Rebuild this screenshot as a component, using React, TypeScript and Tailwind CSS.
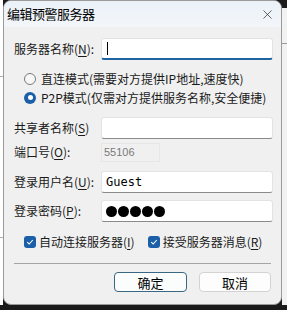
import { X } from 'lucide-react'

const font = { fontFamily: '"Noto Sans CJK SC", "Microsoft YaHei", sans-serif' }

function Key({ k }: { k: string }) {
  return <span className="underline underline-offset-2">{k}</span>
}

function Field({ children, focused }: { children?: React.ReactNode; focused?: boolean }) {
  return (
    <div
      className={`w-[172px] h-[22px] bg-white border border-[#e3e3e3] rounded-[3px] flex items-center pl-[4px] ${
        focused ? 'border-b-2 border-b-[#1f63a0]' : 'border-b-[#8a8a8a]'
      }`}
    >
      {children}
    </div>
  )
}

function Row({ label, children, className = '' }: { label: React.ReactNode; children: React.ReactNode; className?: string }) {
  return (
    <div className={`flex items-center h-[22px] ${className}`}>
      <div className="w-[87px] whitespace-nowrap">{label}</div>
      {children}
    </div>
  )
}

function Check() {
  return (
    <span className="w-[12px] h-[12px] rounded-[3px] bg-[#1a5fa8] flex items-center justify-center">
      <svg width="8" height="8" viewBox="0 0 8 8">
        <path d="M1.2 4.2 L3.2 6 L6.8 2" fill="none" stroke="white" strokeWidth="1.1" />
      </svg>
    </span>
  )
}

export default function App() {
  return (
    <div className="w-[287px] h-[310px] bg-[#1b1b1b] flex flex-col overflow-hidden text-[12px] text-[#1a1a1a]" style={font}>
      <div className="flex h-[305px]">
        {/* left edge of window behind */}
        <div className="w-[3px] bg-white flex flex-col">
          <div className="h-[76px]" />
          <div className="h-px bg-[#b0b0b0]" />
          <div className="h-[160px]" />
          <div className="h-px bg-[#b0b0b0]" />
        </div>

        {/* dialog */}
        <div className="w-[279px] bg-[#f0f0f0] rounded-[8px] border border-[#9a9a9a] flex flex-col overflow-hidden">
          {/* title bar */}
          <div className="h-[26px] flex items-center justify-between bg-gradient-to-b from-[#eaf1f8] to-[#f3f6f9] pl-[3px] pr-[6px]">
            <span className="text-[13px] text-black tracking-[-0.5px]">编辑预警服务器</span>
            <X size={15} strokeWidth={1.1} className="text-[#222]" />
          </div>

          <div className="flex flex-col pl-[10px]">
            <Row label={<>服务器名称(<Key k="N" />):</>} className="mt-[11px]">
              <Field focused>
                <span className="w-px h-[13px] bg-black ml-[1px]" />
              </Field>
            </Row>

            <div className="flex flex-col mt-[9px] ml-[10px]">
              <div className="flex items-center h-[19px] gap-[5px]">
                <span className="w-[12px] h-[12px] rounded-full border border-[#7a7a7a] bg-[#f7f7f7]" />
                <span className="whitespace-nowrap">直连模式(需要对方提供IP地址,速度快)</span>
              </div>
              <div className="flex items-center h-[19px] gap-[5px]">
                <span className="w-[12px] h-[12px] rounded-full bg-[#1a5fa8] flex items-center justify-center">
                  <span className="w-[5px] h-[5px] rounded-full bg-white" />
                </span>
                <span className="whitespace-nowrap">P2P模式(仅需对方提供服务名称,安全便捷)</span>
              </div>
            </div>

            <Row label={<>共享者名称(<Key k="S" />)</>} className="mt-[10px]">
              <Field />
            </Row>

            <Row label={<>端口号(<Key k="O" />):</>} className="mt-[2px]">
              <div className="w-[59px] h-[19px] bg-[#f0f0f0] border border-[#e6e6e6] flex items-center pl-[2px] text-[#7a7a7a] text-[11px]" style={{ fontFamily: '"Liberation Sans", Arial, sans-serif' }}>
                55106
              </div>
            </Row>

            <Row label={<>登录用户名(<Key k="U" />):</>} className="mt-[8px]">
              <Field>
                <span className="text-[12px] text-black" style={{ fontFamily: '"DejaVu Sans Mono", "Liberation Mono", monospace' }}>
                  Guest
                </span>
              </Field>
            </Row>

            <Row label={<>登录密码(<Key k="P" />):</>} className="mt-[7px]">
              <Field>
                <div className="flex gap-[1px]">
                  <span className="w-[11px] h-[11px] rounded-full bg-black" />
                  <span className="w-[11px] h-[11px] rounded-full bg-black" />
                  <span className="w-[11px] h-[11px] rounded-full bg-black" />
                  <span className="w-[11px] h-[11px] rounded-full bg-black" />
                  <span className="w-[11px] h-[11px] rounded-full bg-black" />
                </div>
              </Field>
            </Row>

            <div className="flex items-center h-[16px] mt-[12px] ml-[10px]">
              <Check />
              <span className="ml-[3px] whitespace-nowrap">自动连接服务器(<Key k="I" />)</span>
              <span className="ml-[13px]"><Check /></span>
              <span className="ml-[3px] whitespace-nowrap">接受服务器消息(<Key k="R" />)</span>
            </div>

            <div className="h-px bg-[#a5a5a5] mt-[13px] mr-[10px]" />

            <div className="flex justify-end gap-[12px] mt-[8px] mr-[10px]">
              <button className="w-[73px] h-[20px] rounded-[4px] border border-[#3a6783] bg-[#fbfdfd] text-[13px] text-black leading-none">
                确定
              </button>
              <button className="w-[72px] h-[20px] rounded-[4px] border border-[#d3d3d3] bg-[#fdfdfd] text-[13px] text-black leading-none">
                取消
              </button>
            </div>
          </div>
        </div>

        {/* right edge of window behind */}
        <div className="w-[5px] bg-[#f2f2f2] flex flex-col">
          <div className="h-[8px] bg-[#1b1b1b]" />
          <div className="h-[35px]" />
          <div className="h-px bg-[#9a9a9a]" />
        </div>
      </div>
    </div>
  )
}
